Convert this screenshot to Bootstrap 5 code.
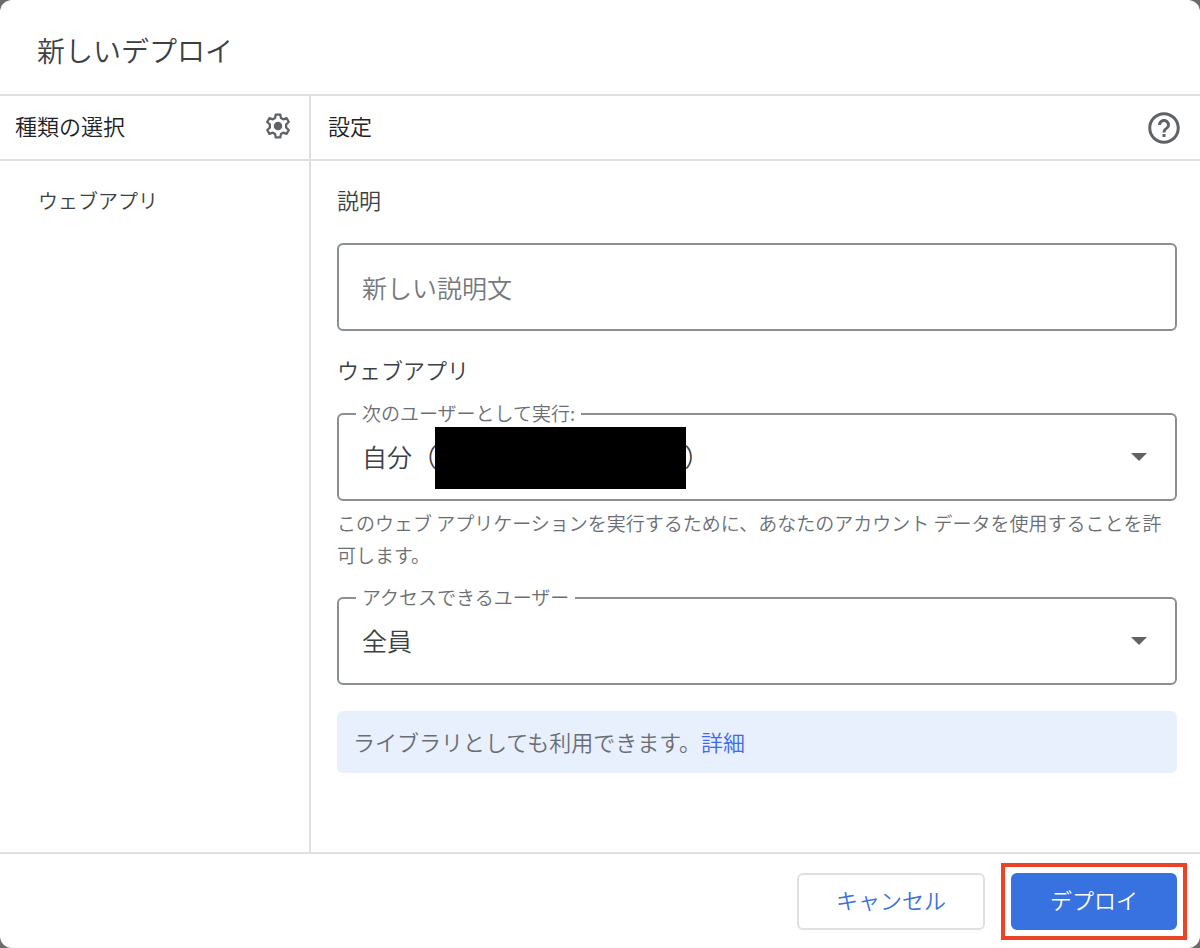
<!DOCTYPE html>
<html lang="ja">
<head>
<meta charset="utf-8">
<meta name="viewport" content="width=device-width, initial-scale=1">
<title>新しいデプロイ</title>
<link href="https://cdn.jsdelivr.net/npm/bootstrap@5.3.0/dist/css/bootstrap.min.css" rel="stylesheet">
<style>
  :root { --line: #dfe0e6; --ink: #3c4043; --muted: #6a6e72; --outline: #8a8f94; --text-weight: 350; }
  body { background: #6b6b6b; color: var(--ink); font-family: "Noto Sans CJK JP", sans-serif; font-weight: var(--text-weight); font-size: 22px; line-height: 32px; }
  .deploy-dialog { border-radius: 12px; }
  .dialog-head { height: 96px; padding: 6px 37px 0; border-bottom: 2px solid var(--line); }
  .dialog-head h1 { font-size: 28px; font-weight: var(--text-weight); line-height: 40px; }
  .type-pane { flex: 0 0 311px; border-right: 2px solid var(--line); }
  .pane-head { height: 65px; border-bottom: 2px solid var(--line); color: #202124; }
  .pane-head h2, .settings-body h3 { font-size: 22px; font-weight: var(--text-weight); line-height: 32px; }
  .pane-head h2 { padding-bottom: 6px; }
  .type-pane .pane-head { padding: 0 15px; }
  .settings-pane .pane-head { padding: 0 18px 0 17px; }
  .type-link { color: var(--ink); font-size: 20px; padding: 24px 38px; }
  .icon-btn { color: #5f6368; line-height: 0; }
  .settings-body { padding: 22px 23px 22px 26px; }
  .settings-body h3 { margin-bottom: 28px; }
  .outlined-field { height: 88px; border: 2px solid var(--outline); border-radius: 6px; padding: 0 23px; font-size: 25px; font-weight: var(--text-weight); color: var(--ink); background-color: #fff; }
  .outlined-field.form-select { background-image: none; }
  .outlined-field::placeholder { color: #75797d; opacity: 1; }
  .form-heading { margin-top: 22px; }
  .block-gap { margin-top: 26px; }
  .float-label { position: absolute; top: -16px; left: 19px; padding: 0 6px; background: #fff; color: var(--muted); font-size: 19px; line-height: 32px; }
  .select-arrow { position: absolute; right: 30px; top: 40px; pointer-events: none; }
  .redaction { position: absolute; left: 98px; top: 14px; width: 251px; height: 62px; background: #000; pointer-events: none; }
  .helper { color: var(--muted); font-size: 19px; padding-top: 6px; }
  .info-box { background: #e8effd; color: #6a6d71; border-radius: 6px; padding: 14px 16px 16px; }
  .info-box a { color: #4068f0; }
  .dialog-foot { height: 96px; gap: 16px; padding-right: 13px; border-top: 2px solid var(--line); }
  .dialog-foot .btn { height: 57px; font-size: 22px; font-weight: var(--text-weight); border-radius: 6px; padding: 0 37px 4px; border-width: 2px; }
  .btn-cancel, .btn-cancel:hover { color: #3b72df; border-color: var(--line); background: #fff; }
  .btn-deploy, .btn-deploy:hover { color: #fff; background: #3871e0; border-color: #3871e0; }
  .highlight-frame { border: 4px solid #ea4326; padding: 6px; }
</style>
</head>
<body>
<main class="deploy-dialog bg-white min-vh-100 d-flex flex-column">
  <header class="dialog-head d-flex align-items-center">
    <h1 class="m-0">新しいデプロイ</h1>
  </header>

  <div class="d-flex flex-grow-1">
    <aside class="type-pane">
      <div class="pane-head d-flex align-items-center justify-content-between">
        <h2 class="m-0">種類の選択</h2>
        <button type="button" class="icon-btn btn p-0 pb-1 border-0" aria-label="デプロイタイプを有効にする">
          <svg width="32" height="32" viewBox="0 0 24 24" fill="none" stroke="currentColor" stroke-width="1.7" stroke-linejoin="round">
            <path d="M10.3 3.400h3.400l.5 2.600 1.700 1 2.500-.9 1.700 2.900-2 1.700v2.600l2 1.700-1.700 2.900-2.500-.9-1.700 1-.5 2.600h-3.400L9.800 18l-1.700-1-2.500.9L3.900 15l2-1.700v-2.600l-2-1.700 1.700-2.900 2.500.9 1.700-1z"/>
            <circle cx="12" cy="12" r="3.200" fill="currentColor" stroke="none"/>
          </svg>
        </button>
      </div>
      <nav><a href="#" class="type-link d-block text-decoration-none">ウェブアプリ</a></nav>
    </aside>

    <section class="settings-pane flex-grow-1">
      <div class="pane-head d-flex align-items-center justify-content-between">
        <h2 class="m-0">設定</h2>
        <button type="button" class="icon-btn btn p-0 border-0" aria-label="ヘルプ">
          <svg width="36" height="36" viewBox="0 0 24 24" fill="currentColor"><path d="M11 18h2v-2h-2v2zm1-16.500C6.200 1.500 1.500 6.200 1.500 12S6.200 22.500 12 22.500 22.500 17.800 22.500 12 17.800 1.500 12 1.500zm0 19c-4.700 0-8.500-3.800-8.500-8.500S7.300 3.500 12 3.500s8.500 3.800 8.500 8.500-3.800 8.500-8.500 8.500zM12 6c-2.200 0-4 1.800-4 4h2c0-1.100.9-2 2-2s2 .9 2 2c0 2-3 1.750-3 5h2c0-2.250 3-2.500 3-5 0-2.200-1.800-4-4-4z"/></svg>
        </button>
      </div>

      <form class="settings-body">
        <h3><label for="description">説明</label></h3>
        <input id="description" type="text" class="form-control outlined-field shadow-none" placeholder="新しい説明文">

        <h3 class="form-heading">ウェブアプリ</h3>
        <div class="position-relative">
          <select id="run-as" class="form-select outlined-field shadow-none">
            <option>自分（&#12288;&#12288;&#12288;&#12288;&#12288;&#12288;&#12288;&#12288;&#12288;&nbsp;&nbsp;&nbsp;&nbsp;）</option>
          </select>
          <label for="run-as" class="float-label">次のユーザーとして実行:</label>
          <span class="redaction"></span>
          <svg class="select-arrow" width="16" height="8" viewBox="0 0 16 8" fill="#5f6368"><path d="M0 0h16L8 8z"/></svg>
        </div>
        <p class="helper mb-0">このウェブ アプリケーションを実行するために、あなたのアカウント データを使用することを許可します。</p>

        <div class="position-relative block-gap">
          <select id="access" class="form-select outlined-field shadow-none">
            <option>全員</option>
          </select>
          <label for="access" class="float-label">アクセスできるユーザー</label>
          <svg class="select-arrow" width="16" height="8" viewBox="0 0 16 8" fill="#5f6368"><path d="M0 0h16L8 8z"/></svg>
        </div>

        <div class="info-box block-gap">ライブラリとしても利用できます。<a href="#" class="text-decoration-none">詳細</a></div>
      </form>
    </section>
  </div>

  <footer class="dialog-foot d-flex align-items-center justify-content-end">
    <button type="button" class="btn btn-cancel">キャンセル</button>
    <div class="highlight-frame d-flex">
      <button type="button" class="btn btn-deploy">デプロイ</button>
    </div>
  </footer>
</main>
<script src="https://cdn.jsdelivr.net/npm/bootstrap@5.3.0/dist/js/bootstrap.bundle.min.js"></script>
</body>
</html>
